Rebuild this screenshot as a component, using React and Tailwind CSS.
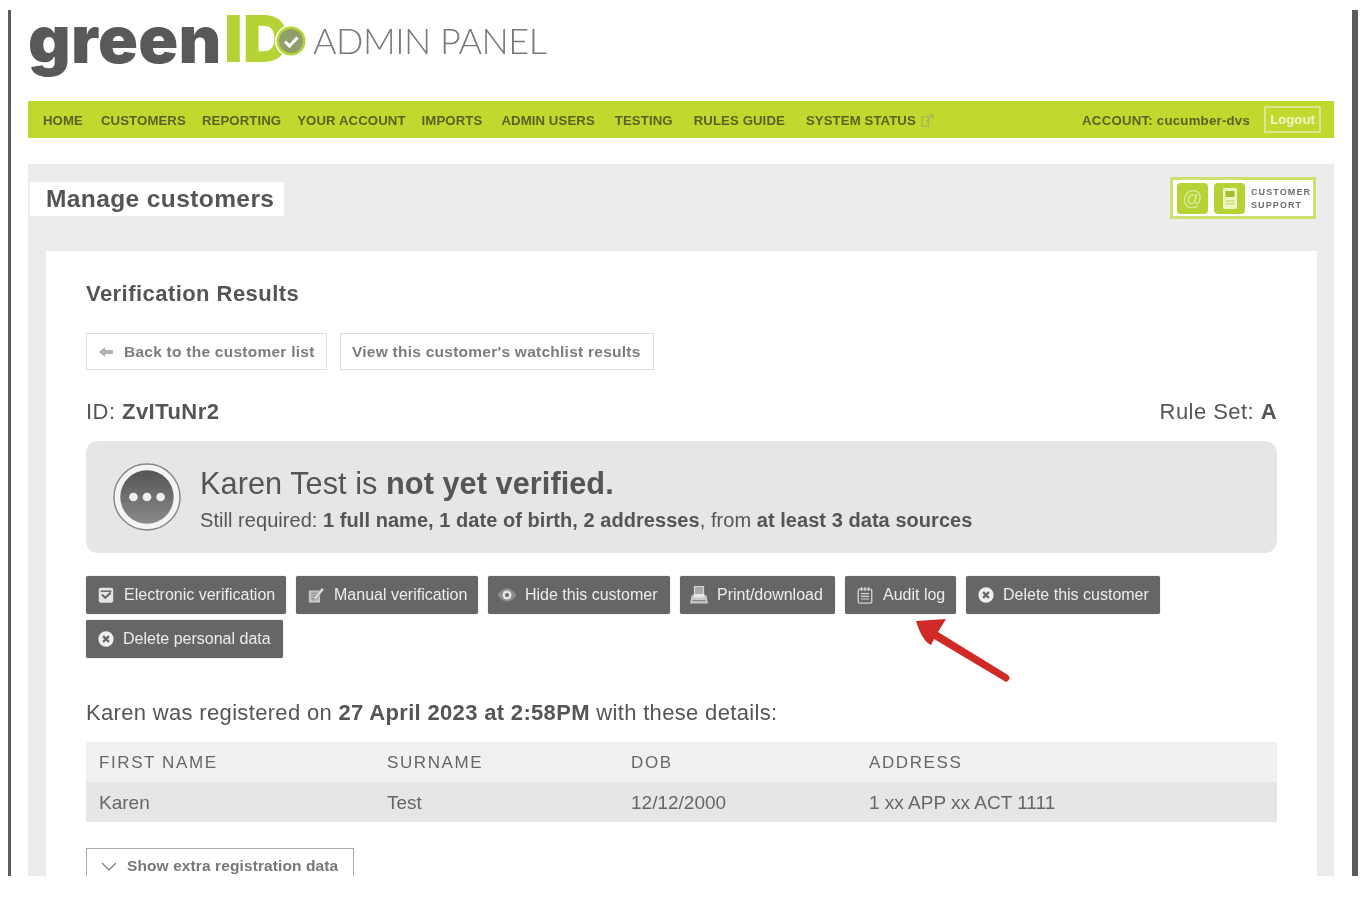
import React from "react";

const sans = "font-['Liberation_Sans',Arial,sans-serif]";

const Ico = ({ children, className = "w-[18px] h-[18px]" }) => (
  <svg viewBox="0 0 20 20" className={`shrink-0 ${className}`}>{children}</svg>
);

const IconElectronic = () => (
  <Ico>
    <rect x="2" y="2" width="16" height="16.500" rx="2" fill="#e4e4e4" />
    <rect x="4" y="5" width="12" height="1.600" fill="#666" />
    <path d="M5.500 9.500l3.800 3.800 6-6" fill="none" stroke="#666" strokeWidth="2.200" />
  </Ico>
);
const IconManual = () => (
  <Ico>
    <rect x="2" y="5" width="12.500" height="13.500" fill="#c4c4c4" />
    <path d="M4.500 8h6M4.500 11h5M4.500 14h7" stroke="#7a7a7a" strokeWidth="1.100" />
    <path d="M8 12.500l8.500-10.500 2.500 2-8.500 10.500-3.500 1.500z" fill="#e0e0e0" stroke="#666" strokeWidth=".6" />
  </Ico>
);
const IconEye = () => (
  <Ico className="w-[20px] h-[20px]">
    <path d="M0.500 10c3-4.600 6.500-6.500 9.500-6.500s6.500 1.900 9.500 6.500c-3 4.600-6.500 6.500-9.500 6.500s-6.500-1.900-9.500-6.500z" fill="#8d8d8d" />
    <circle cx="10" cy="10" r="4.500" fill="#e4e4e4" />
    <circle cx="10" cy="10" r="2" fill="#666" />
  </Ico>
);
const IconPrint = () => (
  <Ico className="w-[20px] h-[20px]">
    <path d="M5.500 1.500h9v9h-9z" fill="#a9a9a9" stroke="#d6d6d6" strokeWidth="1.200" />
    <path d="M2.500 10.500h15l1.500 8H1z" fill="#c8c8c8" />
    <rect x="4.500" y="9" width="11" height="3.500" fill="#e8e8e8" />
    <rect x="3.500" y="15" width="13" height="1.300" fill="#888" />
  </Ico>
);
const IconLog = () => (
  <Ico>
    <rect x="2.500" y="3.500" width="15" height="15.500" rx="1.500" fill="none" stroke="#d2d2d2" strokeWidth="1.500" />
    <path d="M6 1v4.500M10 1v4.500M14 1v4.500" stroke="#d2d2d2" strokeWidth="1.500" />
    <path d="M5.500 8.500h9M5.500 11.500h9M5.500 14.500h9" stroke="#d2d2d2" strokeWidth="1.200" />
  </Ico>
);
const IconX = () => (
  <Ico>
    <circle cx="10" cy="10" r="8.500" fill="#efefef" />
    <path d="M6.800 6.800l6.400 6.400M13.200 6.800l-6.400 6.400" stroke="#666" strokeWidth="2.600" />
  </Ico>
);

const ActionButton = ({ icon, label, w, gap = "gap-[9px]", pl = "pl-[11px]" }) => (
  <button className={`h-[38px] ${w} ${gap} ${pl} flex items-center bg-[#666666] rounded-[2px] text-[16px] text-[#ececec] whitespace-nowrap shadow-[0_0_1px_#888]`}>
    {icon}
    <span>{label}</span>
  </button>
);

const nav = [
  ["HOME", "ml-0"],
  ["CUSTOMERS", "ml-[18px]"],
  ["REPORTING", "ml-[16px]"],
  ["YOUR ACCOUNT", "ml-[16px]"],
  ["IMPORTS", "ml-[16px]"],
  ["ADMIN USERS", "ml-[19px]"],
  ["TESTING", "ml-[20px]"],
  ["RULES GUIDE", "ml-[21px]"],
  ["SYSTEM STATUS", "ml-[21px]"],
];

export default function App() {
  return (
    <div className={`h-[900px] bg-white overflow-hidden blur-[0.5px] ${sans}`}>
      <div className="relative ml-[8px] mt-[10px] w-[1350px] h-[866px] border-l-[3px] border-r-[6px] border-[#5c5c5c] flex flex-col pl-[17px] pr-[18px]">
        {/* Logo */}
        <header className="h-[91px] shrink-0 flex items-start">
          <div className="relative w-[285px] h-[80px] flex items-baseline font-['Inter'] font-black">
            <span className="text-[#58595b] text-[66px] tracking-[0.300px] leading-[58px]">green</span>
            <span className="absolute left-[196px] top-0 text-[#b5d334] text-[64.500px] leading-[58px]">ID</span>
            <svg viewBox="0 0 32 32" className="absolute left-[247px] top-[15px] w-[32px] h-[32px]">
              <circle cx="16" cy="16" r="16" fill="#fff" />
              <circle cx="16" cy="16" r="14.500" fill="#b5d334" />
              <circle cx="16" cy="16" r="12" fill="#8f9f6c" />
              <path d="M10 16.500l4.500 4.500 8-8.500" fill="none" stroke="#fff" strokeWidth="3" />
            </svg>
          </div>
          <span className="mt-[10px] text-[36px] leading-[40px] font-['Lato'] font-light text-[#77787a] tracking-[-0.500px]">ADMIN PANEL</span>
        </header>

        {/* Nav */}
        <nav className="h-[37px] shrink-0 bg-[#c1d82f] flex items-center pl-[15px] pr-[13px] text-[13.200px] font-bold text-[#5b6120] whitespace-nowrap">
          {nav.map(([n, m]) => (
            <span key={n} className={`${m} mt-[2px] tracking-[0.100px]`}>{n}</span>
          ))}
          <svg viewBox="0 0 16 16" className="ml-[4px] mt-[2px] w-[15px] h-[15px]" fill="none" stroke="#a4b65a" strokeWidth="1.300">
            <path d="M2 4h7v10H2zM7 9l7-7M10 2h4v4" />
          </svg>
          <span className="ml-auto mt-[2px] tracking-[0.250px]">ACCOUNT: cucumber-dvs</span>
          <span className="ml-[14px] h-[27px] w-[57px] flex items-center justify-center border-2 border-[#dbe78c] text-[#f1f6c8]">Logout</span>
        </nav>

        {/* Panel */}
        <main className="mt-[26px] flex-1 min-h-0 bg-[#ececec] overflow-hidden flex flex-col">
          <div className="h-[87px] shrink-0 flex items-start justify-between pr-[18px]">
            <h1 className="mt-[18px] ml-[2px] h-[34px] w-[254px] pl-[16px] bg-white text-[24.500px] leading-[34px] font-bold text-[#555] tracking-[0.400px]">Manage customers</h1>
            <div className="mt-[13px] h-[42px] w-[146px] bg-white border-[3px] border-[#cfe06e] flex items-center pl-[4px]">
              <span className="w-[31px] h-[31px] rounded-[4px] bg-[#b5d334] flex items-center justify-center text-[#dcea9c] text-[20px]">@</span>
              <span className="ml-[6px] w-[31px] h-[31px] rounded-[4px] bg-[#b5d334] flex items-center justify-center">
                <svg viewBox="0 0 14 21" className="w-[14px] h-[21px]">
                  <rect width="14" height="21" rx="1.500" fill="#eef4c4" />
                  <rect x="2.500" y="3" width="9" height="6" fill="#a4be2c" />
                  <path d="M2.500 13h9M2.500 16h9" stroke="#cbdc78" strokeWidth="1.500" />
                </svg>
              </span>
              <span className="ml-[6px] mt-[2px] text-[9px] leading-[13px] font-bold tracking-[1.100px] text-[#6d6d6d]">CUSTOMER<br />SUPPORT</span>
            </div>
          </div>

          <section className="flex-1 ml-[18px] mr-[17px] bg-white px-[40px] pt-[29px] text-[#555]">
            <h2 className="text-[22px] leading-[28px] font-bold text-[#555] tracking-[0.450px]">Verification Results</h2>

            <div className="mt-[25px] flex gap-[13px] text-[15.500px] tracking-[0.250px] font-bold text-[#7c7c7c]">
              <button className="h-[37px] w-[241px] border border-[#dddddd] flex items-center pl-[12px] gap-[11px]">
                <svg viewBox="0 0 14 12" className="w-[14px] h-[12px]"><path d="M0 6l6-5v3h8v4H6v3z" fill="#b3b3b3" /></svg>
                <span>Back to the customer list</span>
              </button>
              <button className="h-[37px] w-[314px] border border-[#dddddd] flex items-center pl-[11px]">
                View this customer's watchlist results
              </button>
            </div>

            <div className="mt-[29px] flex justify-between text-[22px] leading-[26px] tracking-[0.450px] text-[#555]">
              <span>ID: <b>ZvITuNr2</b></span>
              <span>Rule Set: <b>A</b></span>
            </div>

            <div className="mt-[16px] h-[112px] bg-[#e5e6e8] rounded-[12px] flex items-center pl-[27px]">
              <svg viewBox="0 0 70 70" className="w-[68px] h-[68px] shrink-0">
                <defs>
                  <linearGradient id="g1" x1="0" y1="0" x2="0" y2="1">
                    <stop offset="0" stopColor="#555" />
                    <stop offset="1" stopColor="#8a8a8a" />
                  </linearGradient>
                </defs>
                <circle cx="35" cy="35" r="34" fill="#f4f4f4" stroke="#888" strokeWidth="1.500" />
                <circle cx="35" cy="35" r="27.500" fill="url(#g1)" />
                <circle cx="21" cy="35" r="4.500" fill="#eee" />
                <circle cx="35" cy="35" r="4.500" fill="#eee" />
                <circle cx="49" cy="35" r="4.500" fill="#eee" />
              </svg>
              <div className="ml-[19px] mt-[4px]">
                <div className="text-[30.700px] tracking-[0.050px] leading-[36px] text-[#555]">Karen Test is <b>not yet verified.</b></div>
                <div className="mt-[6px] text-[20px] tracking-[0.050px] leading-[24px] text-[#555]">
                  Still required: <b>1 full name, 1 date of birth, 2 addresses</b>, from <b>at least 3 data sources</b>
                </div>
              </div>
            </div>

            <div className="mt-[23px] flex flex-wrap gap-x-[10px] gap-y-[6px] w-[1100px]">
              <ActionButton icon={<IconElectronic />} label="Electronic verification" w="w-[200px]" />
              <ActionButton icon={<IconManual />} label="Manual verification" w="w-[182px]" />
              <ActionButton icon={<IconEye />} label="Hide this customer" w="w-[182px]" gap="gap-[8px]" pl="pl-[9px]" />
              <ActionButton icon={<IconPrint />} label="Print/download" w="w-[155px]" gap="gap-[8px]" pl="pl-[9px]" />
              <ActionButton icon={<IconLog />} label="Audit log" w="w-[111px]" />
              <ActionButton icon={<IconX />} label="Delete this customer" w="w-[194px]" gap="gap-[8px]" />
              <ActionButton icon={<IconX />} label="Delete personal data" w="w-[197px]" gap="gap-[8px]" />
            </div>

            <p className="mt-[42px] text-[22px] leading-[26px] tracking-[0.330px] text-[#555]">
              Karen was registered on <b>27 April 2023 at 2:58PM</b> with these details:
            </p>

            <div className="mt-[16px]">
              <div className="grid grid-cols-[288px_244px_238px_1fr] h-[40px] pt-[1px] items-center bg-[#f1f1f1] text-[17px] tracking-[1.600px] text-[#666]">
                <span className="pl-[13px]">FIRST NAME</span>
                <span className="pl-[13px]">SURNAME</span>
                <span className="pl-[13px]">DOB</span>
                <span className="pl-[13px]">ADDRESS</span>
              </div>
              <div className="grid grid-cols-[288px_244px_238px_1fr] h-[40px] pt-[2px] items-center bg-[#e5e6e8] text-[19px] text-[#666]">
                <span className="pl-[13px]">Karen</span>
                <span className="pl-[13px]">Test</span>
                <span className="pl-[13px]">12/12/2000</span>
                <span className="pl-[13px]">1 xx APP xx ACT 1111</span>
              </div>
            </div>

            <button className="mt-[26px] h-[40px] w-[268px] border border-[#aaaaaa] flex items-start pt-[5px] pl-[14px] gap-[10px] text-[15.500px] tracking-[0.100px] font-bold text-[#777]">
              <svg viewBox="0 0 16 10" className="w-[16px] h-[10px] mt-[8px]" fill="none" stroke="#777" strokeWidth="1.200"><path d="M1 1l7 7 7-7" /></svg>
              <span>Show extra registration data</span>
            </button>
          </section>
        </main>

        {/* Red annotation arrow */}
        <svg viewBox="0 0 100 70" className="absolute left-[903px] top-[605px] w-[100px] h-[70px]">
          <path d="M2 6 L32 4 L24 17 L94 60 Q98 64 92 67 L20 24 L17 30 Q8 26 2 6z" fill="#cf2a27" />
        </svg>
      </div>
    </div>
  );
}
